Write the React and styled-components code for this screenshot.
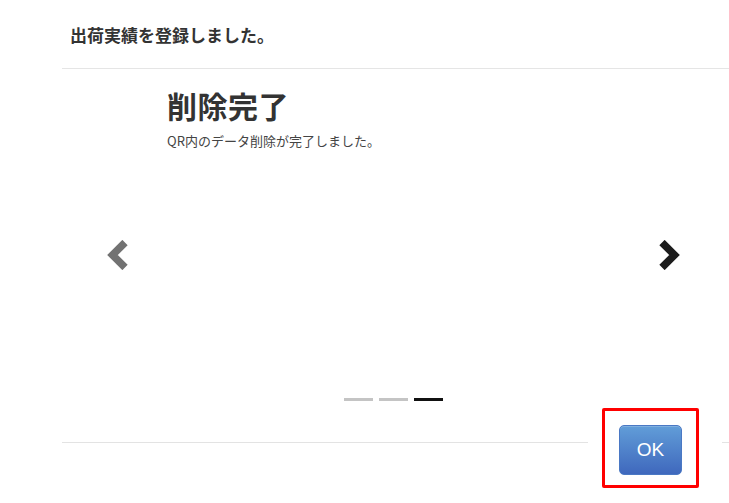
import React from "react";
import styled, { createGlobalStyle } from "styled-components";

const Global = createGlobalStyle`
  html, body { margin: 0; padding: 0; background: #fff; }
  body { font-family: "Noto Sans CJK JP", "Noto Sans", sans-serif; color: #333; }
`;

const Page = styled.div`
  width: 729px;
  height: 503px;
  padding-left: 62px;
  box-sizing: border-box;
  overflow: hidden;
`;

const Header = styled.div`
  height: 69px;
  display: flex;
  align-items: center;
  padding-left: 8px;
  padding-top: 1px;
  box-sizing: border-box;
  border-bottom: 1px solid #e5e5e5;
  font-size: 17px;
  font-weight: 700;
  color: #333;
`;

const Carousel = styled.div`
  height: 374px;
  display: grid;
  grid-template-columns: 104px 1fr 104px;
  grid-template-rows: 1fr auto;
  border-bottom: 1px solid #e3e3e3;
  box-sizing: border-box;
`;

const Control = styled.div`
  grid-row: 1 / span 2;
  grid-column: ${(p) => p.$col};
  display: flex;
  align-items: center;
  justify-content: center;
  padding-left: ${(p) => p.$padLeft || 0}px;
  padding-right: ${(p) => p.$padRight || 0}px;
  padding-bottom: 2px;
  color: ${(p) => p.$color};
`;

const Content = styled.div`
  grid-column: 2;
  grid-row: 1;
  padding-top: 18px;
  padding-left: 1px;
`;

const Title = styled.h2`
  margin: 0;
  font-size: 30px;
  line-height: 36px;
  font-weight: 700;
  letter-spacing: 0.5px;
  color: #333;
`;

const Subtitle = styled.p`
  margin: 9px 0 0;
  font-size: 13px;
  line-height: 18px;
  color: #444;
`;

const Indicators = styled.div`
  grid-column: 2;
  grid-row: 2;
  display: flex;
  justify-content: center;
  gap: 6px;
  padding-right: 4px;
  padding-bottom: 41px;
`;

const Dash = styled.span`
  width: 29px;
  height: 3px;
  background: ${(p) => (p.$active ? "#111" : "#c4c4c4")};
`;

const Footer = styled.div`
  position: relative;
  height: 60px;
`;

const Highlight = styled.div`
  position: absolute;
  right: 30px;
  top: -35px;
  width: 97px;
  height: 80px;
  box-sizing: border-box;
  border: 3px solid #ff0000;
  border-radius: 2px;
  background: #fff;
  box-shadow: -14px 0 0 0 #fff, 23px 0 0 0 #fff;
  display: flex;
  align-items: center;
  justify-content: center;
  padding-top: 3px;
`;

const OkButton = styled.button`
  width: 63px;
  height: 50px;
  border: 1px solid #4a78c4;
  border-radius: 5px;
  background: linear-gradient(#619dd8, #3f68bd);
  color: #fff;
  font-family: "Liberation Sans", Arial, sans-serif;
  font-size: 19px;
  padding: 0;
  box-shadow: inset 0 1px 0 rgba(255, 255, 255, 0.2);
`;

const Chevron = ({ dir }) => (
  <svg width="21" height="30" viewBox="0 0 21 30" style={{ transform: dir === "right" ? "scaleX(-1)" : undefined }}>
    <polyline
      points="18,2.5 5.5,15 18,27.5"
      fill="none"
      stroke="currentColor"
      strokeWidth="7.5"
      strokeLinejoin="miter"
      strokeLinecap="butt"
    />
  </svg>
);

export default function App() {
  return (
    <>
      <Global />
      <Page>
        <Header>出荷実績を登録しました。</Header>
        <Carousel>
          <Control $col={1} $color="#727272" $padLeft={6}>
            <Chevron dir="left" />
          </Control>
          <Content>
            <Title>削除完了</Title>
            <Subtitle>QR内のデータ削除が完了しました。</Subtitle>
          </Content>
          <Control $col={3} $color="#1c1c1c" $padLeft={0} $padRight={16}>
            <Chevron dir="right" />
          </Control>
          <Indicators>
            <Dash />
            <Dash />
            <Dash $active />
          </Indicators>
        </Carousel>
        <Footer>
          <Highlight>
            <OkButton>OK</OkButton>
          </Highlight>
        </Footer>
      </Page>
    </>
  );
}
